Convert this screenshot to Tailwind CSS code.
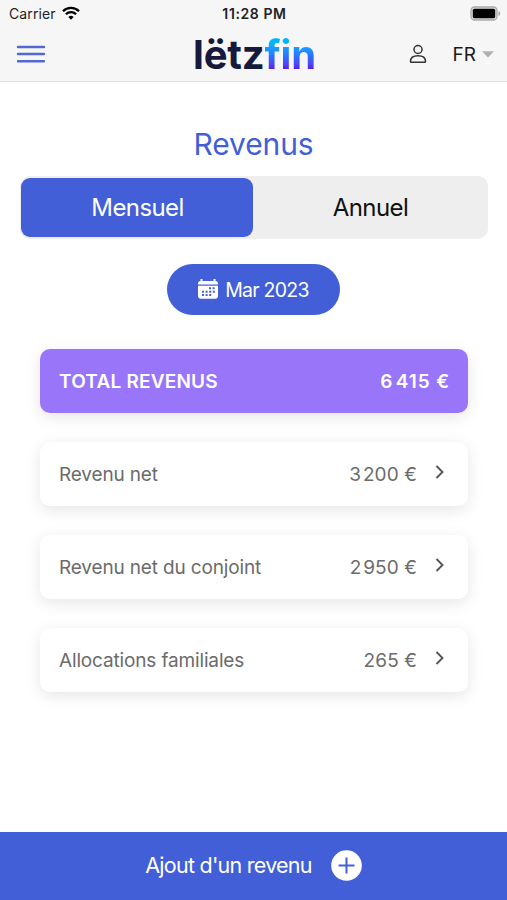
<!DOCTYPE html>
<html lang="fr">

<head>
    <meta charset="UTF-8" />
    <meta name="viewport" content="width=device-width, initial-scale=1.0" />
    <title>Lëtzfin - Revenus</title>
    <script src="https://cdn.jsdelivr.net/npm/@tailwindcss/browser@4"></script>
</head>

<body class="bg-white font-['Inter',sans-serif] h-screen flex flex-col overflow-hidden">

    <!-- Header -->
    <header class="h-[82px] shrink-0 bg-[#f6f6f6] border-b border-[#e2e2e2]">
        <!-- Status bar -->
        <div class="h-7 grid grid-cols-3 items-center pl-[9px] pr-[6px] text-[14px] leading-none text-[#222]">
            <div class="flex items-center gap-[6px]">
                <span class="tracking-[0.1px]">Carrier</span>
                <svg class="w-[18px] h-[14px] -mt-0.5" viewBox="0 0 18 14" fill="none" stroke="#000" stroke-width="2.3">
                    <path d="M1 5.2a11.3 11.3 0 0 1 16 0" />
                    <path d="M3.9 8.2a7.2 7.2 0 0 1 10.2 0" />
                    <path d="M9 13.8l-2.6-2.8a3.7 3.7 0 0 1 5.2 0z" fill="#000" stroke="none" />
                </svg>
            </div>
            <span class="pr-px text-center text-[14px] font-semibold tracking-[0.6px]">11:28 PM</span>
            <svg class="w-[31px] h-[15px] justify-self-end -mt-0.5" viewBox="0 0 31 15">
                <rect x="1" y="1" width="26" height="13" rx="3.5" fill="#ddd" stroke="#aaa" stroke-width="1.3" />
                <rect x="2.8" y="2.7" width="22.4" height="9.6" rx="1.6" fill="#000" />
                <path d="M28.5 5v5c2.4-1 2.4-4 0-5z" fill="#aaa" />
            </svg>
        </div>
        <!-- Nav -->
        <div class="h-[52px] grid grid-cols-3 items-center pl-4 pr-[13px]">
            <svg class="w-[30px] h-5" viewBox="0 0 30 20" stroke="#5468d4" stroke-width="2.4" stroke-linecap="round">
                <path d="M2 3h26M2 10h26M2 17.2h26" />
            </svg>
            <div class="flex justify-center pt-0.5 pr-px text-[40px] leading-[48px] font-bold tracking-[-0.2px]">
                <span class="text-[#151a3d]">lëtz</span><span class="bg-linear-to-b from-[#00b4ff] from-25% via-[#2f6bff] via-55% to-[#5a10e8] to-80% bg-clip-text text-transparent">fin</span>
            </div>
            <div class="flex items-center justify-end">
                <svg class="w-[18px] h-5 mr-[26px]" viewBox="0 0 18 20" fill="none" stroke="#333" stroke-width="1.5">
                    <circle cx="9" cy="5.5" r="4" />
                    <path d="M1.5 17.5c0-3.5 3-5.7 7.5-5.7s7.5 2.2 7.5 5.7c0 .5-.3.8-.8.8H2.3c-.5 0-.8-.3-.8-.8z" />
                </svg>
                <span class="pt-0.5 text-[19px] text-[#1a1a1a]">FR</span>
                <svg class="w-3 h-[7px] ml-[6px]" viewBox="0 0 12 7" fill="#b0b0b0">
                    <path d="M0 .3h12L6 6.5z" />
                </svg>
            </div>
        </div>
    </header>

    <!-- Content -->
    <main class="flex-1">
        <h1 class="mt-[42px] text-center text-[30px] leading-10 tracking-[-0.1px] text-[#425fd7]">Revenus</h1>

        <div class="mt-3 ml-5 mr-[19px] h-[63px] p-0.5 pl-px flex bg-[#eee] rounded-[10px] text-2xl tracking-[-0.6px]">
            <button class="flex-1 pl-px rounded-[9px] bg-[#425fd7] text-white">Mensuel</button>
            <button class="flex-1 pl-0.5 text-[#111]">Annuel</button>
        </div>

        <button class="mt-[25px] mx-auto w-[173px] h-[51px] flex items-center justify-center gap-[7px] rounded-full bg-[#425fd7] text-white text-[19.5px] tracking-[-0.75px]">
            <svg class="w-5 h-5 -mt-0.5" viewBox="0 0 20 20">
                <path d="M0 4.5q0-2.5 2.5-2.5h15q2.5 0 2.5 2.5v1H0zM2.5 0h2v3h-2zM15.5 0h2v3h-2z" fill="#fff" />
                <path d="M0 6.7h20v10q0 3-3 3H3q-3 0-3-3z" fill="#fff" />
                <path d="M11 9.3h6M4 12.8h13M4 16.1h9.5" stroke="#425fd7" stroke-width="2" stroke-dasharray="2 1.6" />
            </svg>
            <span class="pt-0.5">Mar 2023</span>
        </button>

        <div class="mt-[34px] ml-10 mr-[39px] flex flex-col gap-[29px] text-[19px] tracking-[-0.15px] text-[#6b6b6b]">
            <div class="h-16 pt-0.5 pl-[19px] pr-[18px] flex items-center justify-between rounded-[10px] bg-[#9975fa] text-white font-semibold tracking-[0.2px] shadow-[0_4px_16px_rgba(0,0,0,0.1)]">
                <span>TOTAL REVENUS</span>
                <span class="tracking-[0.9px]">6&#8202;415 €</span>
            </div>
            <div class="h-16 pt-0.5 pl-[19px] pr-[22px] flex items-center rounded-[10px] bg-white shadow-[0_4px_16px_rgba(0,0,0,0.1)]">
                <span class="flex-1">Revenu net</span>
                <span class="tracking-[0.1px]">3&#8202;200 €</span>
                <svg class="ml-[17px] mb-[6px] w-3 h-4" viewBox="0 0 12 16" fill="none" stroke="#555" stroke-width="1.9"><path d="M2.5 2l6 6-6 6" /></svg>
            </div>
            <div class="h-16 pt-0.5 pl-[19px] pr-[22px] flex items-center rounded-[10px] bg-white shadow-[0_4px_16px_rgba(0,0,0,0.1)]">
                <span class="flex-1">Revenu net du conjoint</span>
                <span class="tracking-[0.1px]">2&#8202;950 €</span>
                <svg class="ml-[17px] mb-[6px] w-3 h-4" viewBox="0 0 12 16" fill="none" stroke="#555" stroke-width="1.9"><path d="M2.5 2l6 6-6 6" /></svg>
            </div>
            <div class="h-16 pt-0.5 pl-[19px] pr-[22px] flex items-center rounded-[10px] bg-white shadow-[0_4px_16px_rgba(0,0,0,0.1)]">
                <span class="flex-1">Allocations familiales</span>
                <span class="tracking-[0.1px]">265 €</span>
                <svg class="ml-[17px] mb-[6px] w-3 h-4" viewBox="0 0 12 16" fill="none" stroke="#555" stroke-width="1.9"><path d="M2.5 2l6 6-6 6" /></svg>
            </div>
        </div>
    </main>

    <!-- Footer -->
    <footer class="h-[68px] shrink-0 flex items-center justify-center gap-[19px] bg-[#425fd7] text-white text-[21.5px] tracking-[-0.75px]">
        <span class="-mt-px">Ajout d'un revenu</span>
        <svg class="w-[31px] h-[31px] -mt-0.5" viewBox="0 0 31 31">
            <circle cx="15.5" cy="15.5" r="15.3" fill="#fff" />
            <path d="M7.5 15.5h16M15.5 7.5v16" stroke="#425fd7" stroke-width="2" />
        </svg>
    </footer>

</body>

</html>
